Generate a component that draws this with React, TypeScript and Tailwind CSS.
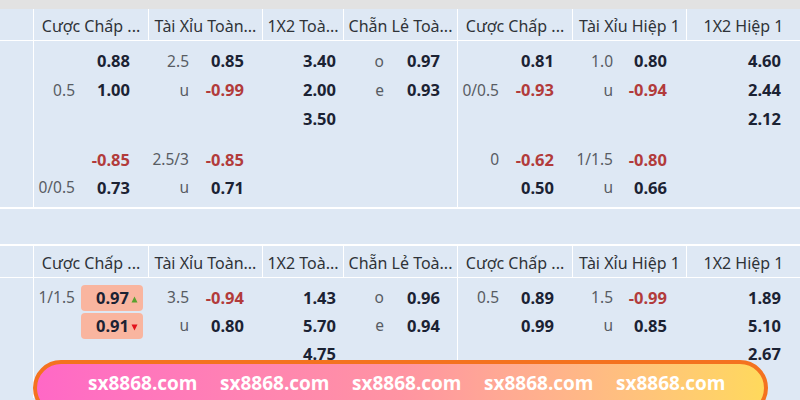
import React from "react";

type Cell = { l?: string; v?: string; red?: boolean; hl?: "up" | "down" };

const headers = [
  "",
  "Cược Chấp ...",
  "Tài Xỉu Toàn...",
  "1X2 Toà...",
  "Chẵn Lẻ Toà...",
  "Cược Chấp ...",
  "Tài Xỉu Hiệp 1",
  "1X2 Hiệp 1",
];

const prClass = ["", "pr-[18px]", "pr-[18px]", "pr-[22px]", "pr-[17px]", "pr-[18px]", "pr-[19px]", "pr-[19px]"];

const sec1: Cell[][] = [
  [],
  [{ v: "0.88" }, { l: "0.5", v: "1.00" }, {}, { v: "-0.85", red: true }, { l: "0/0.5", v: "0.73" }],
  [{ l: "2.5", v: "0.85" }, { l: "u", v: "-0.99", red: true }, {}, { l: "2.5/3", v: "-0.85", red: true }, { l: "u", v: "0.71" }],
  [{ v: "3.40" }, { v: "2.00" }, { v: "3.50" }, {}, {}],
  [{ l: "o", v: "0.97" }, { l: "e", v: "0.93" }, {}, {}, {}],
  [{ v: "0.81" }, { l: "0/0.5", v: "-0.93", red: true }, {}, { l: "0", v: "-0.62", red: true }, { v: "0.50" }],
  [{ l: "1.0", v: "0.80" }, { l: "u", v: "-0.94", red: true }, {}, { l: "1/1.5", v: "-0.80", red: true }, { l: "u", v: "0.66" }],
  [{ v: "4.60" }, { v: "2.44" }, { v: "2.12" }, {}, {}],
];

const sec2: Cell[][] = [
  [],
  [{ l: "1/1.5", v: "0.97", hl: "up" }, { v: "0.91", hl: "down" }, {}],
  [{ l: "3.5", v: "-0.94", red: true }, { l: "u", v: "0.80" }, {}],
  [{ v: "1.43" }, { v: "5.70" }, { v: "4.75" }],
  [{ l: "o", v: "0.96" }, { l: "e", v: "0.94" }, {}],
  [{ l: "0.5", v: "0.89" }, { v: "0.99" }, {}],
  [{ l: "1.5", v: "-0.99", red: true }, { l: "u", v: "0.85" }, {}],
  [{ v: "1.89" }, { v: "5.10" }, { v: "2.67" }],
];

const GRID = "grid grid-cols-[33px_115px_114px_81px_114px_115px_114px_114px]";

function Row({ c, col, h }: { c: Cell; col: number; h: string }) {
  return (
    <div className={`flex items-center ${h}`}>
      <div className="w-[41px] shrink-0 text-right text-[15.5px] text-[#585c63] whitespace-nowrap">{c.l ?? ""}</div>
      {c.hl ? (
        <div className="flex-1 flex justify-end pr-[5px] pl-[6px]">
          <div className="flex items-center justify-end w-full h-[26px] rounded-[4px] bg-[#f9b59f] pr-[5px]">
            <span className="text-[16.5px] font-bold text-[#1b2233]">{c.v}</span>
            {c.hl === "up" ? (
              <svg width="7" height="7" viewBox="0 0 7 7" className="ml-[2px] mt-[2px]">
                <polygon points="3.5,0.5 6.5,6.5 0.5,6.5" fill="#5aa12e" />
              </svg>
            ) : (
              <svg width="7" height="7" viewBox="0 0 7 7" className="ml-[2px] mt-[2px]">
                <polygon points="0.5,0.5 6.5,0.5 3.5,6.5" fill="#e3121b" />
              </svg>
            )}
          </div>
        </div>
      ) : (
        <div
          className={`flex-1 text-right text-[16.5px] font-bold ${prClass[col]} ${
            c.red ? "text-[#b23b3b]" : "text-[#1b2233]"
          }`}
        >
          {c.v ?? ""}
        </div>
      )}
    </div>
  );
}

function Header() {
  return (
    <div className={`${GRID} h-[32px] border-b border-white`}>
      {headers.map((h, i) => (
        <div
          key={i}
          className={`flex items-center justify-center px-[4px] pt-[3px] text-[16px] text-[#2f3338] whitespace-nowrap overflow-hidden ${
            i > 0 ? "border-l border-white" : ""
          }`}
        >
          {h}
        </div>
      ))}
    </div>
  );
}

export default function App() {
  return (
    <div
      className="relative w-[800px] h-[400px] overflow-hidden bg-[#dee8f4]"
      style={{ fontFamily: '"Noto Sans", "Open Sans", sans-serif' }}
    >
      <div className="h-[9px] bg-[#e2e2e2]" />
      <Header />
      {/* section 1 body */}
      <div className={`${GRID} h-[168px] border-b-2 border-white`}>
        {sec1.map((col, i) => (
          <div key={i} className={`flex flex-col pt-[6px] ${i === 1 || i === 5 ? "border-l border-white" : ""}`}>
            {col.length > 0 && (
              <>
                <Row c={col[0]} col={i} h="h-[29px]" />
                <Row c={col[1]} col={i} h="h-[29px]" />
                <Row c={col[2]} col={i} h="h-[29px]" />
                <div className="h-[12px]" />
                <Row c={col[3]} col={i} h="h-[28px]" />
                <Row c={col[4]} col={i} h="h-[28px]" />
              </>
            )}
          </div>
        ))}
      </div>
      <div className="h-[37px] border-b-2 border-white" />
      <Header />
      <div className={`${GRID} h-[120px]`}>
        {sec2.map((col, i) => (
          <div key={i} className={`flex flex-col pt-[6px] ${i === 1 || i === 5 ? "border-l border-white" : ""}`}>
            {col.map((c, j) => (
              <Row key={j} c={c} col={i} h="h-[28px]" />
            ))}
          </div>
        ))}
      </div>

      {/* promo banner overlay */}
      <div className="absolute left-[33px] top-[360px] w-[735px] h-[56px] rounded-full border-[4px] border-[#f4721f] bg-gradient-to-r from-[#ff68c6] via-[#ff94a2] to-[#ffd95c] overflow-hidden">
        <div className="flex pl-[51px] pt-[7px] gap-[25px]">
          {[0, 1, 2, 3, 4].map((k) => (
            <span
              key={k}
              className="w-[107px] text-[19px] font-bold text-white leading-[24px] whitespace-nowrap"
              style={{ fontFamily: '"Open Sans", "Noto Sans", sans-serif' }}
            >
              sx8868.com
            </span>
          ))}
        </div>
      </div>
    </div>
  );
}
